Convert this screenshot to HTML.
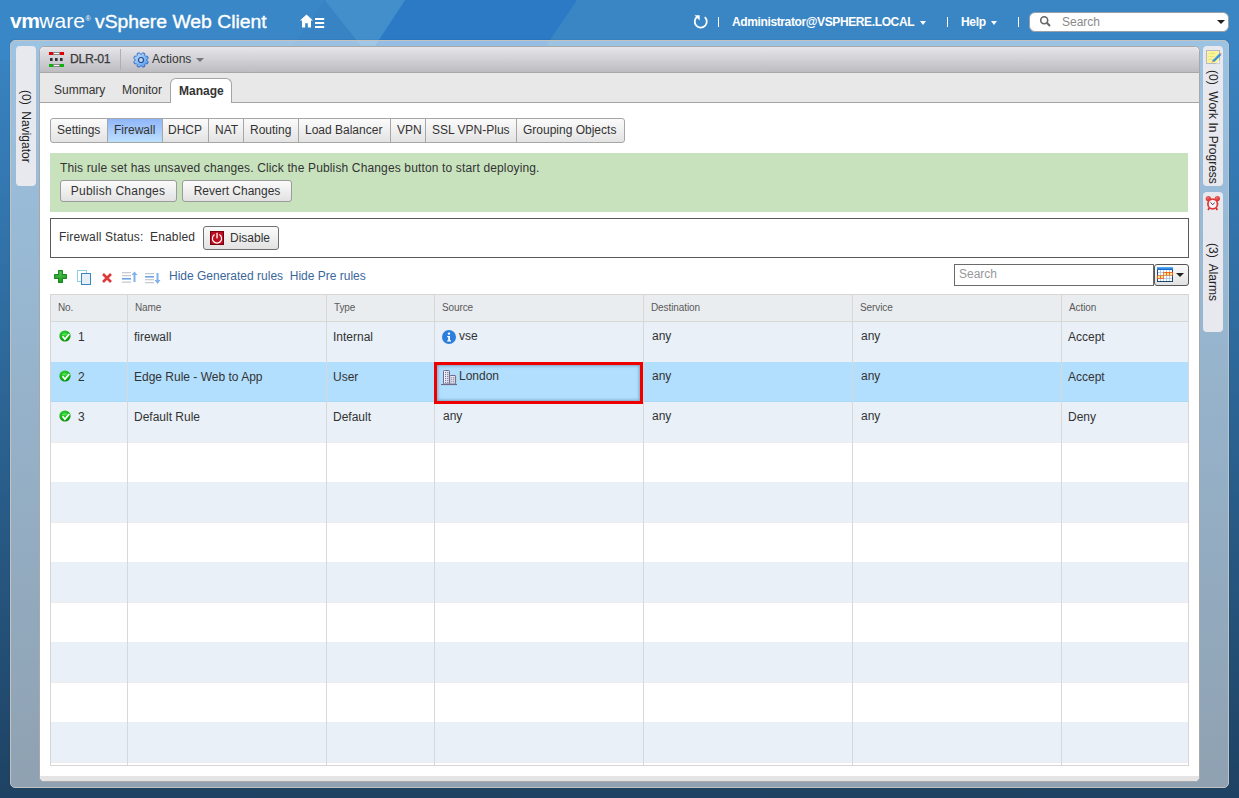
<!DOCTYPE html>
<html><head><meta charset="utf-8">
<style>
*{box-sizing:border-box;}
html,body{margin:0;padding:0;}
body{width:1239px;height:798px;overflow:hidden;position:relative;font-family:"Liberation Sans",sans-serif;font-size:12px;color:#333;
background:linear-gradient(to bottom,#3a88c8 0px,#1e4262 798px);}
.abs{position:absolute;}
.hdr{position:absolute;left:0;top:0;width:1239px;height:40px;}
.logo{position:absolute;left:10px;top:9px;color:#fff;white-space:nowrap;}
.outer{position:absolute;left:10px;top:40px;width:1219px;height:748px;border-radius:5px;background:rgba(255,255,255,0.5);border:1px solid #c2c2c2;box-shadow:0 0 1px rgba(0,20,50,0.5);}
.side{position:absolute;background:#e8e9ee;border-radius:4px;}
.vtext{position:absolute;transform-origin:0 0;transform:rotate(90deg);white-space:nowrap;color:#222;font-size:12px;}
.main{position:absolute;left:39px;top:46px;width:1161px;height:736px;background:#fff;border:1px solid #a8a8a8;border-radius:5px;overflow:hidden;}
.tb{position:absolute;left:0;top:0;width:100%;height:26px;background:linear-gradient(#ececec,#c9c9cd);border-bottom:1px solid #b8b8b8;}
.tabs{position:absolute;left:0;top:26px;width:100%;height:30px;background:#e9e9e9;border-bottom:1px solid #a0a0a0;}
.tab{position:absolute;top:12px;font-size:12px;color:#333;}
.stabs{position:absolute;left:11px;top:72px;height:24px;border:1px solid #a9a9a9;border-radius:3px;background:linear-gradient(#fafafa,#e6e6e6);}
.st{position:absolute;top:0;height:22px;line-height:21px;text-align:center;color:#333;border-right:1px solid #a9a9a9;}
.btn{position:absolute;border:1px solid #9b9b9b;border-radius:3px;background:linear-gradient(#fbfbfb,#e2e2e2);color:#333;text-align:center;}
.th{font-size:10px;color:#5a5a5a;white-space:nowrap;letter-spacing:-0.1px;}
.td{font-size:12px;color:#333;white-space:nowrap;}
</style></head>
<body>
<div class="hdr">
<svg class="abs" style="left:0;top:0" width="1239" height="60"><rect width="1239" height="60" fill="#3a87c7"/><polygon points="577,0 1239,0 1239,60 536.5,60" fill="#3a86c5"/><polygon points="405,0 577,0 536.5,60 368.7,60 368.7,55.5" fill="#2c7ac6"/><polygon points="324.7,0 368.7,55.5 368.7,60 283.3,60" fill="#3783c4"/><polygon points="324.7,0 405,0 368.7,55.5" fill="#428fcc"/></svg>
<div class="logo"><span style="font-weight:bold;font-size:21px;letter-spacing:-0.5px">vm</span><span style="font-size:21px">ware</span><span style="font-size:7px;position:relative;top:-7px;margin-left:0.5px">®</span> <span style="font-size:18px;display:inline-block;transform:scaleX(1.075);transform-origin:0 0;margin-left:1px;-webkit-text-stroke:0.35px #fff">vSphere Web Client</span></div>
</div>


<svg class="abs" style="left:300px;top:14px" width="26" height="15" viewBox="0 0 26 15">
 <path d="M6.5 0.5L0 6.5h2v7h3.2v-4.2h2.6v4.2H11v-7h2z" fill="#fff"/>
 <rect x="15" y="4" width="9.2" height="2" fill="#fff"/><rect x="15" y="8" width="9.2" height="2" fill="#fff"/><rect x="15" y="12" width="9.2" height="2" fill="#fff"/>
</svg>
<svg class="abs" style="left:693px;top:14px" width="16" height="15" viewBox="0 0 16 15">
 <path d="M4.2 2.8A6 6 0 1 0 11.8 3.2" fill="none" stroke="#fff" stroke-width="1.8"/>
 <path d="M1.5 1.2h5.2v5.2z" fill="#fff"/>
</svg>
<div class="abs" style="left:718px;top:17px;width:1px;height:10px;background:#fff;"></div>
<div class="abs" style="left:732px;top:15px;font-size:12px;font-weight:bold;color:#fff;white-space:nowrap;letter-spacing:-0.38px">Administrator@VSPHERE.LOCAL</div>
<div class="abs" style="left:920px;top:21px;width:0;height:0;border-left:3.5px solid transparent;border-right:3.5px solid transparent;border-top:4px solid #fff;"></div>
<div class="abs" style="left:947px;top:17px;width:1px;height:10px;background:#fff;"></div>
<div class="abs" style="left:961px;top:15px;font-size:12px;font-weight:bold;color:#fff;white-space:nowrap;letter-spacing:-0.3px">Help</div>
<div class="abs" style="left:991px;top:21px;width:0;height:0;border-left:3.5px solid transparent;border-right:3.5px solid transparent;border-top:4px solid #fff;"></div>
<div class="abs" style="left:1018px;top:17px;width:1px;height:10px;background:#fff;"></div>
<div class="abs" style="left:1029px;top:12px;width:200px;height:20px;background:#fff;border:1px solid #9aa0a8;border-radius:6px;"></div>
<svg class="abs" style="left:1039px;top:15px" width="13" height="13" viewBox="0 0 13 13"><circle cx="5.2" cy="5.2" r="3.5" fill="none" stroke="#666" stroke-width="1.6"/><path d="M7.8 7.8l3.2 3.2" stroke="#666" stroke-width="2"/></svg>
<div class="abs" style="left:1062px;top:15px;font-size:12px;color:#8a8a8a;">Search</div>
<div class="abs" style="left:1217px;top:20px;width:0;height:0;border-left:4px solid transparent;border-right:4px solid transparent;border-top:4px solid #222;"></div>
<div class="outer"></div>
<div class="side" style="left:16px;top:46px;width:20px;height:140px;"><div class="vtext" style="left:17px;top:44px;">(0)&nbsp; Navigator</div></div>
<div class="side" style="left:1203px;top:46px;width:20px;height:140px;"><div class="vtext" style="left:17px;top:24px;">(0)&nbsp; Work In Progress</div></div>
<div class="side" style="left:1203px;top:192px;width:20px;height:140px;"><div class="vtext" style="left:17px;top:51px;">(3)&nbsp; Alarms</div></div>


<svg class="abs" style="left:1206px;top:50px" width="16" height="15" viewBox="0 0 16 15">
 <rect x="0.5" y="0.5" width="13" height="13" fill="#fbf596" stroke="#b9b6c8"/>
 <g fill="#e6e08a"><rect x="2" y="3" width="1" height="1"/><rect x="4" y="3" width="5" height="1"/><rect x="2" y="6" width="1" height="1"/><rect x="4" y="6" width="4" height="1"/><rect x="2" y="9" width="6" height="1"/></g>
 <path d="M10 13.5l3.5-3.5v3.5z" fill="#fff" stroke="#ccc" stroke-width="0.5"/>
 <path d="M6.6 10.6l7-7 1.3 1.3-7 7z" fill="#2f9ae8" stroke="#1a60a8" stroke-width="0.5"/><path d="M7 10.2l6.6-6.6" stroke="#9ad4ff" stroke-width="0.5"/>
 <path d="M13.6 3.6l0.9-0.9 1.3 1.3-0.9 0.9z" fill="#f09090"/>
 <path d="M6.6 10.6l-0.9 2 2.2-0.7z" fill="#e8d0a0"/><path d="M5.7 12.6l0.5-1 0.5 0.5z" fill="#333"/>
</svg>
<svg class="abs" style="left:1205px;top:195px" width="16" height="16" viewBox="0 0 16 16"><defs><radialGradient id="bel" cx="0.4" cy="0.35" r="0.7"><stop offset="0" stop-color="#f87070"/><stop offset="1" stop-color="#c82020"/></radialGradient></defs>
 <circle cx="3.3" cy="3.6" r="2.6" fill="url(#bel)"/><circle cx="12.3" cy="3.6" r="2.6" fill="url(#bel)"/>
 <path d="M4.6 12.6l-1.6 2.4M10.8 12.6l1.6 2.4" stroke="#d02828" stroke-width="1.6"/>
 <circle cx="7.7" cy="9" r="5.7" fill="#e23a3a"/><circle cx="7.7" cy="9" r="3.9" fill="#f6f6f8"/>
 <path d="M5.6 7.4L7.7 9.8 9.6 7.6" fill="none" stroke="#333" stroke-width="0.9"/>
</svg>
<div class="main"></div>
<!-- toolbar -->
<div class="abs" style="left:40px;top:47px;width:1159px;height:26px;background:linear-gradient(#e6e6ea,#bcbcc1);border-bottom:1px solid #a8a8a8;border-radius:5px 5px 0 0;"></div>
<svg class="abs" style="left:49px;top:52px" width="16" height="16" viewBox="0 0 16 16">
 <rect x="0" y="0" width="15" height="3" fill="#888"/><rect x="0" y="0" width="4" height="3" fill="#e00000"/><rect x="11" y="0" width="4" height="3" fill="#e00000"/><rect x="5" y="1" width="5" height="1" fill="#fff"/>
 <rect x="1" y="6" width="2.6" height="3" fill="#333"/><rect x="6" y="6" width="2.6" height="3" fill="#333"/><rect x="11" y="6" width="2.6" height="3" fill="#333"/>
 <rect x="0" y="12" width="15" height="3" fill="#888"/><rect x="0" y="12" width="4" height="3" fill="#10b010"/><rect x="11" y="12" width="4" height="3" fill="#10b010"/><rect x="5" y="13" width="5" height="1" fill="#fff"/>
</svg>
<div class="abs" style="left:70px;top:52px;font-size:12.3px;color:#3a3a3a;letter-spacing:-0.35px;-webkit-text-stroke:0.25px #3a3a3a">DLR-01</div>
<div class="abs" style="left:120px;top:49px;width:1px;height:21px;background:#b0b0b0;"></div>
<svg class="abs" style="left:133px;top:52px" width="16" height="16" viewBox="0 0 16 16"><defs><linearGradient id="gg" x1="0" y1="0" x2="1" y2="1"><stop offset="0" stop-color="#c8e4ff"/><stop offset="1" stop-color="#4b95e6"/></linearGradient></defs>
 <path d="M13.86 8.65 L15.29 9.75 L14.39 11.92 L12.60 11.69 L11.69 12.60 L11.92 14.39 L9.75 15.29 L8.65 13.86 L7.35 13.86 L6.25 15.29 L4.08 14.39 L4.31 12.60 L3.40 11.69 L1.61 11.92 L0.71 9.75 L2.14 8.65 L2.14 7.35 L0.71 6.25 L1.61 4.08 L3.40 4.31 L4.31 3.40 L4.08 1.61 L6.25 0.71 L7.35 2.14 L8.65 2.14 L9.75 0.71 L11.92 1.61 L11.69 3.40 L12.60 4.31 L14.39 4.08 L15.29 6.25 L13.86 7.35Z" fill="url(#gg)" stroke="#2a66c8" stroke-width="0.9" stroke-linejoin="round"/>
 <circle cx="8" cy="8" r="2.5" fill="#c8d8ea" stroke="#24509a" stroke-width="1.2"/></svg>
<div class="abs" style="left:152px;top:52px;font-size:12px;color:#333">Actions</div>
<div class="abs" style="left:196px;top:58px;width:0;height:0;border-left:4px solid transparent;border-right:4px solid transparent;border-top:4px solid #777;"></div>
<!-- tabs bar -->
<div class="abs" style="left:40px;top:73px;width:1159px;height:30px;background:#e8e8e8;border-bottom:1px solid #a4a4a4;"></div>
<div class="abs" style="left:54px;top:83px;font-size:12px;color:#333">Summary</div>
<div class="abs" style="left:122px;top:83px;font-size:12px;color:#333">Monitor</div>
<div class="abs" style="left:170px;top:78px;width:62px;height:25px;background:#fff;border:1px solid #a4a4a4;border-bottom:none;border-radius:6px 6px 0 0;"></div>
<div class="abs" style="left:179px;top:84px;font-size:12px;font-weight:bold;color:#333">Manage</div>
<!-- subtabs -->
<div class="abs" style="left:50px;top:118px;width:575px;height:25px;border:1px solid #a6a6a6;border-radius:3px;background:linear-gradient(#fbfbfb,#e3e3e3);overflow:hidden;">
 <div class="abs" style="left:57px;top:0;width:55px;height:23px;background:linear-gradient(#90b6fa,#bde0fd);"></div>
 <div class="abs" style="left:56px;top:0;width:1px;height:23px;background:#a6a6a6"></div>
 <div class="abs" style="left:111px;top:0;width:1px;height:23px;background:#a6a6a6"></div>
 <div class="abs" style="left:157px;top:0;width:1px;height:23px;background:#a6a6a6"></div>
 <div class="abs" style="left:192px;top:0;width:1px;height:23px;background:#a6a6a6"></div>
 <div class="abs" style="left:247px;top:0;width:1px;height:23px;background:#a6a6a6"></div>
 <div class="abs" style="left:339px;top:0;width:1px;height:23px;background:#a6a6a6"></div>
 <div class="abs" style="left:374px;top:0;width:1px;height:23px;background:#a6a6a6"></div>
 <div class="abs" style="left:465px;top:0;width:1px;height:23px;background:#a6a6a6"></div>
</div>
<div class="abs" style="left:57px;top:123px;font-size:12px;color:#333;white-space:nowrap">Settings</div>
<div class="abs" style="left:114px;top:123px;font-size:12px;color:#333;white-space:nowrap">Firewall</div>
<div class="abs" style="left:168px;top:123px;font-size:12px;color:#333;white-space:nowrap">DHCP</div>
<div class="abs" style="left:215px;top:123px;font-size:12px;color:#333;white-space:nowrap">NAT</div>
<div class="abs" style="left:250px;top:123px;font-size:12px;color:#333;white-space:nowrap">Routing</div>
<div class="abs" style="left:305px;top:123px;font-size:12px;color:#333;white-space:nowrap">Load Balancer</div>
<div class="abs" style="left:397px;top:123px;font-size:12px;color:#333;white-space:nowrap">VPN</div>
<div class="abs" style="left:432px;top:123px;font-size:12px;color:#333;white-space:nowrap">SSL VPN-Plus</div>
<div class="abs" style="left:523px;top:123px;font-size:12px;color:#333;white-space:nowrap">Grouping Objects</div>
<!-- green banner -->
<div class="abs" style="left:50px;top:153px;width:1138px;height:59px;background:#c8e2be;"></div>
<div class="abs" style="left:60px;top:161px;font-size:12px;color:#333;white-space:nowrap;letter-spacing:0.145px">This rule set has unsaved changes. Click the Publish Changes button to start deploying.</div>
<div class="btn" style="left:60px;top:180px;width:117px;height:22px;line-height:20px;letter-spacing:0.25px;text-indent:-1px">Publish Changes</div>
<div class="btn" style="left:182px;top:180px;width:110px;height:22px;line-height:20px;">Revert Changes</div>
<!-- firewall status -->
<div class="abs" style="left:50px;top:218px;width:1139px;height:40px;border:1px solid #5a5a5a;"></div>
<div class="abs" style="left:59px;top:230px;font-size:12px;color:#333;white-space:nowrap;letter-spacing:0.15px">Firewall Status:</div><div class="abs" style="left:150px;top:230px;font-size:12px;color:#333;white-space:nowrap;letter-spacing:0.15px">Enabled</div>
<div class="btn" style="left:203px;top:226px;width:76px;height:24px;border-color:#707070;"></div>
<svg class="abs" style="left:210px;top:231px" width="14" height="14" viewBox="0 0 14 14"><rect x="0.5" y="0.5" width="13" height="13" fill="#b00818" stroke="#7a0010"/><rect x="1.5" y="1.5" width="11" height="11" fill="#c01020"/><path d="M4.6 3.6A4.6 4.6 0 1 0 9.4 3.6" fill="none" stroke="#fff" stroke-width="1.2"/><rect x="6.4" y="1.8" width="1.3" height="5.6" fill="#fff"/></svg>
<div class="abs" style="left:230px;top:231px;font-size:12px;color:#333">Disable</div>
<!-- action toolbar -->
<svg class="abs" style="left:54px;top:270px" width="14" height="14" viewBox="0 0 14 14"><defs><linearGradient id="pg" x1="0" y1="0" x2="0" y2="1"><stop offset="0" stop-color="#5cc45c"/><stop offset="1" stop-color="#1e9a22"/></linearGradient></defs><path d="M4.6 0.6h3.8v4h4v3.8h-4v4H4.6v-4h-4V4.6h4z" fill="url(#pg)" stroke="#168a1c" stroke-width="1.1" stroke-linejoin="round"/></svg>
<svg class="abs" style="left:77px;top:270px" width="15" height="15" viewBox="0 0 15 15"><rect x="0.5" y="0.5" width="9" height="11" fill="#fff" stroke="#8fd0ea"/><rect x="4.5" y="3.5" width="9" height="11" fill="#e6eef8" stroke="#3a88c0"/></svg>
<svg class="abs" style="left:102px;top:273px" width="10" height="10" viewBox="0 0 10 10"><path d="M1 1L9 9M9 1L1 9" stroke="#dc3838" stroke-width="2.6"/></svg>
<svg class="abs" style="left:121px;top:271px" width="18" height="13" viewBox="0 0 18 13"><rect x="1" y="1" width="9" height="1.3" fill="#c8ccd2"/><rect x="1" y="4" width="9" height="1.3" fill="#c8ccd2"/><rect x="1" y="7" width="9" height="1.6" fill="#6ea4e4"/><rect x="1" y="10.5" width="9" height="1.3" fill="#c8ccd2"/><path d="M13.5 0.5l3 3.5h-2v7h-2v-7h-2z" fill="#7fb2ec"/></svg>
<svg class="abs" style="left:144px;top:272px" width="18" height="13" viewBox="0 0 18 13"><rect x="1" y="1" width="9" height="1.3" fill="#c8ccd2"/><rect x="1" y="4" width="9" height="1.6" fill="#6ea4e4"/><rect x="1" y="7" width="9" height="1.3" fill="#c8ccd2"/><rect x="1" y="10" width="9" height="1.3" fill="#c8ccd2"/><path d="M12.5 1h2v7h2l-3 4-3-4h2z" fill="#7fb2ec"/></svg>
<div class="abs" style="left:169px;top:269px;font-size:12px;color:#3b679b;white-space:nowrap">Hide Generated rules&nbsp; Hide Pre rules</div>
<div class="abs" style="left:954px;top:264px;width:200px;height:22px;border:1px solid #6a6a6a;background:#fff;"></div>
<div class="abs" style="left:959px;top:267px;font-size:12px;color:#999">Search</div>
<div class="btn" style="left:1154px;top:264px;width:35px;height:22px;border-color:#555;"></div>
<svg class="abs" style="left:1157px;top:267px" width="16" height="15" viewBox="0 0 16 15"><defs><linearGradient id="cb" x1="0" y1="0" x2="0" y2="1"><stop offset="0" stop-color="#62b8ff"/><stop offset="1" stop-color="#0a5ec4"/></linearGradient></defs><rect x="0" y="3" width="16" height="12" fill="#0b3768"/><rect x="1" y="3" width="14" height="11" fill="#a9c7e2"/><rect x="6.3" y="4.9" width="9.7" height="3.7" fill="#ee5010"/><rect x="0" y="8.3" width="6.8" height="3.6" fill="#ee5010"/><rect x="0.8999999999999999" y="2.9" width="2.2" height="2.2" fill="#fff"/><rect x="3.9" y="2.9" width="2.2" height="2.2" fill="#fff"/><rect x="6.9" y="2.9" width="2.2" height="2.2" fill="#fff"/><rect x="9.9" y="2.9" width="2.2" height="2.2" fill="#fff"/><rect x="12.9" y="2.9" width="2.2" height="2.2" fill="#fff"/><rect x="0.8999999999999999" y="5.9" width="2.2" height="2.2" fill="#fff"/><rect x="3.9" y="5.9" width="2.2" height="2.2" fill="#fff"/><rect x="6.9" y="5.9" width="2.2" height="2.2" fill="#ffe88a"/><rect x="9.9" y="5.9" width="2.2" height="2.2" fill="#ffe88a"/><rect x="12.9" y="5.9" width="2.2" height="2.2" fill="#ffe88a"/><rect x="0.8999999999999999" y="8.9" width="2.2" height="2.2" fill="#ffe88a"/><rect x="3.9" y="8.9" width="2.2" height="2.2" fill="#ffe88a"/><rect x="6.9" y="8.9" width="2.2" height="2.2" fill="#fff"/><rect x="9.9" y="8.9" width="2.2" height="2.2" fill="#fff"/><rect x="12.9" y="8.9" width="2.2" height="2.2" fill="#fff"/><rect x="0.8999999999999999" y="11.9" width="2.2" height="2.2" fill="#fff"/><rect x="3.9" y="11.9" width="2.2" height="2.2" fill="#fff"/><rect x="6.9" y="11.9" width="2.2" height="2.2" fill="#fff"/><rect x="9.9" y="11.9" width="2.2" height="2.2" fill="#fff"/><rect x="12.9" y="11.9" width="2.2" height="2.2" fill="#fff"/><rect x="0" y="0" width="16" height="3" fill="url(#cb)"/></svg>
<div class="abs" style="left:1176px;top:273px;width:0;height:0;border-left:4px solid transparent;border-right:4px solid transparent;border-top:4px solid #222;"></div>
<div class="abs" style="left:50px;top:294px;width:1139px;height:472px;border:1px solid #d6d6d6;background:#fff;"></div>
<div class="abs" style="left:51px;top:295px;width:1137px;height:26px;background:#eaedf0;"></div>
<div class="abs" style="left:51px;top:321px;width:1137px;height:1px;background:#d8d8d8;"></div>
<div class="abs" style="left:51px;top:322px;width:1137px;height:40px;background:#e9f0f8;"></div>
<div class="abs" style="left:51px;top:362px;width:1137px;height:1px;background:#ededed;"></div>
<div class="abs" style="left:51px;top:362px;width:1137px;height:40px;background:#b3dffe;"></div>
<div class="abs" style="left:51px;top:401px;width:1137px;height:1px;background:#aad9fb;"></div>
<div class="abs" style="left:51px;top:402px;width:1137px;height:1px;background:#ededed;"></div>
<div class="abs" style="left:51px;top:402px;width:1137px;height:40px;background:#e9f0f8;"></div>
<div class="abs" style="left:51px;top:442px;width:1137px;height:1px;background:#ededed;"></div>
<div class="abs" style="left:51px;top:482px;width:1137px;height:1px;background:#ededed;"></div>
<div class="abs" style="left:51px;top:482px;width:1137px;height:40px;background:#e9f0f8;"></div>
<div class="abs" style="left:51px;top:522px;width:1137px;height:1px;background:#ededed;"></div>
<div class="abs" style="left:51px;top:562px;width:1137px;height:1px;background:#ededed;"></div>
<div class="abs" style="left:51px;top:562px;width:1137px;height:40px;background:#e9f0f8;"></div>
<div class="abs" style="left:51px;top:602px;width:1137px;height:1px;background:#ededed;"></div>
<div class="abs" style="left:51px;top:642px;width:1137px;height:1px;background:#ededed;"></div>
<div class="abs" style="left:51px;top:642px;width:1137px;height:40px;background:#e9f0f8;"></div>
<div class="abs" style="left:51px;top:682px;width:1137px;height:1px;background:#ededed;"></div>
<div class="abs" style="left:51px;top:722px;width:1137px;height:1px;background:#ededed;"></div>
<div class="abs" style="left:51px;top:722px;width:1137px;height:40px;background:#e9f0f8;"></div>
<div class="abs" style="left:51px;top:762px;width:1137px;height:1px;background:#ededed;"></div>
<div class="abs" style="left:127px;top:295px;width:1px;height:470px;background:#d8d8d8;"></div>
<div class="abs" style="left:326px;top:295px;width:1px;height:470px;background:#d8d8d8;"></div>
<div class="abs" style="left:434px;top:295px;width:1px;height:470px;background:#d8d8d8;"></div>
<div class="abs" style="left:643px;top:295px;width:1px;height:470px;background:#d8d8d8;"></div>
<div class="abs" style="left:852px;top:295px;width:1px;height:470px;background:#d8d8d8;"></div>
<div class="abs" style="left:1061px;top:295px;width:1px;height:470px;background:#d8d8d8;"></div>
<div class="th abs" style="left:58px;top:302px;">No.</div>
<div class="th abs" style="left:135px;top:302px;">Name</div>
<div class="th abs" style="left:334px;top:302px;">Type</div>
<div class="th abs" style="left:442px;top:302px;">Source</div>
<div class="th abs" style="left:651px;top:302px;">Destination</div>
<div class="th abs" style="left:860px;top:302px;">Service</div>
<div class="th abs" style="left:1069px;top:302px;">Action</div>
<svg class="abs" style="left:58.5px;top:330px" width="12" height="12" viewBox="0 0 12 12"><defs><radialGradient id="gc0" cx="0.45" cy="0.35" r="0.65"><stop offset="0" stop-color="#3ed83e"/><stop offset="0.7" stop-color="#14b014"/><stop offset="1" stop-color="#0a800a"/></radialGradient></defs><circle cx="6" cy="6" r="5.6" fill="url(#gc0)"/><path d="M3.2 4.6A5 3 0 0 1 8.8 4.6" fill="none" stroke="#8ef08e" stroke-width="0.8" opacity="0.7"/><path d="M3.6 6.2l2.3 3 4.4-5.2" fill="none" stroke="#fff" stroke-width="1.7"/></svg>
<div class="td abs" style="left:78px;top:330px;">1</div>
<div class="td abs" style="left:134px;top:330px;">firewall</div>
<div class="td abs" style="left:333px;top:330px;">Internal</div>
<svg class="abs" style="left:442px;top:330px" width="14" height="14" viewBox="0 0 14 14"><circle cx="7" cy="7" r="7" fill="#2b7edb"/><circle cx="7" cy="3.6" r="1.2" fill="#fff"/><path d="M5.2 6h2.8v4.2h1v1.2H5.2v-1.2h1V7.2h-1z" fill="#fff"/></svg>
<div class="td abs" style="left:459px;top:329px;">vse</div>
<div class="td abs" style="left:652px;top:329px;">any</div>
<div class="td abs" style="left:861px;top:329px;">any</div>
<div class="td abs" style="left:1068px;top:330px;">Accept</div>
<svg class="abs" style="left:58.5px;top:370px" width="12" height="12" viewBox="0 0 12 12"><defs><radialGradient id="gc1" cx="0.45" cy="0.35" r="0.65"><stop offset="0" stop-color="#3ed83e"/><stop offset="0.7" stop-color="#14b014"/><stop offset="1" stop-color="#0a800a"/></radialGradient></defs><circle cx="6" cy="6" r="5.6" fill="url(#gc1)"/><path d="M3.2 4.6A5 3 0 0 1 8.8 4.6" fill="none" stroke="#8ef08e" stroke-width="0.8" opacity="0.7"/><path d="M3.6 6.2l2.3 3 4.4-5.2" fill="none" stroke="#fff" stroke-width="1.7"/></svg>
<div class="td abs" style="left:78px;top:370px;">2</div>
<div class="td abs" style="left:134px;top:370px;">Edge Rule - Web to App</div>
<div class="td abs" style="left:333px;top:370px;">User</div>
<svg class="abs" style="left:441px;top:369px" width="17" height="17" viewBox="0 0 17 17"><defs><linearGradient id="bg1" x1="0" y1="0" x2="1" y2="0"><stop offset="0" stop-color="#fafafc"/><stop offset="1" stop-color="#dcdce4"/></linearGradient></defs>
<rect x="2.5" y="1.5" width="6" height="13.5" rx="0.8" fill="url(#bg1)" stroke="#6e6a8c"/>
<rect x="8.8" y="6.5" width="5.8" height="8.5" rx="0.6" fill="url(#bg1)" stroke="#6e6a8c"/>
<g fill="#7a76a0"><rect x="4" y="3" width="1.1" height="1.1"/><rect x="6.2" y="3" width="1.1" height="1.1"/><rect x="4" y="5" width="1.1" height="1.1"/><rect x="6.2" y="5" width="1.1" height="1.1"/><rect x="4" y="7" width="1.1" height="1.1"/><rect x="6.2" y="7" width="1.1" height="1.1"/><rect x="4" y="9" width="1.1" height="1.1"/><rect x="6.2" y="9" width="1.1" height="1.1"/><rect x="4" y="11" width="1.1" height="1.1"/><rect x="6.2" y="11" width="1.1" height="1.1"/><rect x="4" y="13" width="1.1" height="1.1"/><rect x="6.2" y="13" width="1.1" height="1.1"/>
<rect x="10.2" y="8.2" width="1.1" height="1.1"/><rect x="12.1" y="8.2" width="1.1" height="1.1"/><rect x="10.2" y="10.2" width="1.1" height="1.1"/><rect x="12.1" y="10.2" width="1.1" height="1.1"/><rect x="10.2" y="12.2" width="1.1" height="1.1"/><rect x="12.1" y="12.2" width="1.1" height="1.1"/></g>
<rect x="0" y="15" width="16" height="1.1" fill="#6e6a8c"/></svg>
<div class="td abs" style="left:459px;top:369px;">London</div>
<div class="td abs" style="left:652px;top:369px;">any</div>
<div class="td abs" style="left:861px;top:369px;">any</div>
<div class="td abs" style="left:1068px;top:370px;">Accept</div>
<svg class="abs" style="left:58.5px;top:410px" width="12" height="12" viewBox="0 0 12 12"><defs><radialGradient id="gc2" cx="0.45" cy="0.35" r="0.65"><stop offset="0" stop-color="#3ed83e"/><stop offset="0.7" stop-color="#14b014"/><stop offset="1" stop-color="#0a800a"/></radialGradient></defs><circle cx="6" cy="6" r="5.6" fill="url(#gc2)"/><path d="M3.2 4.6A5 3 0 0 1 8.8 4.6" fill="none" stroke="#8ef08e" stroke-width="0.8" opacity="0.7"/><path d="M3.6 6.2l2.3 3 4.4-5.2" fill="none" stroke="#fff" stroke-width="1.7"/></svg>
<div class="td abs" style="left:78px;top:410px;">3</div>
<div class="td abs" style="left:134px;top:410px;">Default Rule</div>
<div class="td abs" style="left:333px;top:410px;">Default</div>
<div class="td abs" style="left:443px;top:409px;">any</div>
<div class="td abs" style="left:652px;top:409px;">any</div>
<div class="td abs" style="left:861px;top:409px;">any</div>
<div class="td abs" style="left:1068px;top:410px;">Deny</div>
<div class="abs" style="left:434px;top:362px;width:209px;height:42px;border:3px solid #ee0000;box-shadow:inset 0 0 3px 1px rgba(60,90,120,0.45);"></div>
<div class="abs" style="left:40px;top:776px;width:1159px;height:5px;background:#e4e4e4;border-radius:0 0 5px 5px;"></div>
</body></html>
